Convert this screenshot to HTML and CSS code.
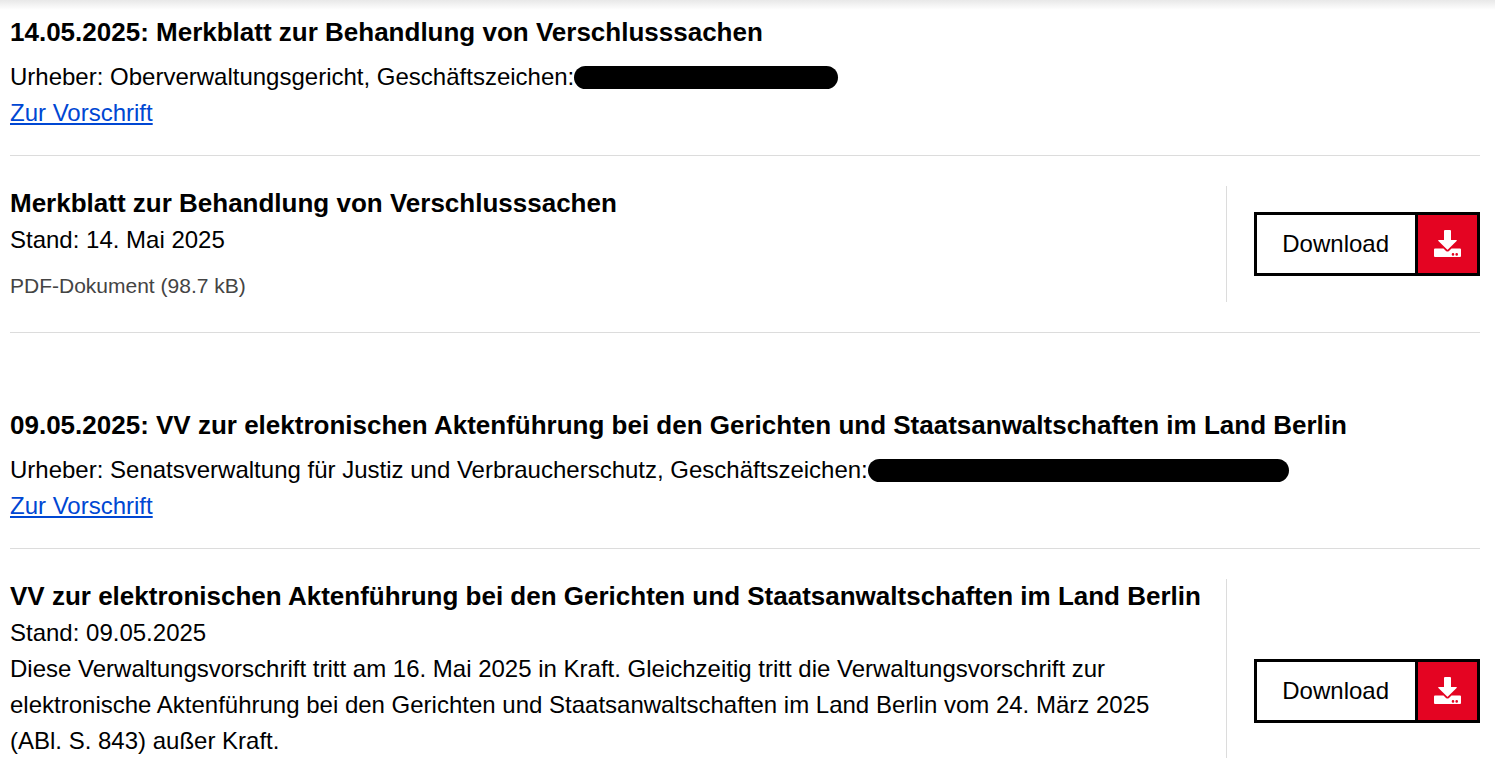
FILE: index.html
```
<!DOCTYPE html>
<html lang="de">
<head>
    <meta charset="UTF-8">
    <meta name="viewport" content="width=device-width, initial-scale=1">
    <title>Verwaltungsvorschriften</title>
    <link rel="stylesheet" href="styles.css">
</head>
<body>
<main class="list">
    <section class="entry">
        <h2 class="title">14.05.2025: Merkblatt zur Behandlung von Verschlusssachen</h2>
        <p class="author"><span>Urheber: Oberverwaltungsgericht, Geschäftszeichen:</span><span class="redacted short"></span></p>
        <p><a class="link" href="#merkblatt">Zur Vorschrift</a></p>
        <div class="download" id="merkblatt">
            <div class="info">
                <h3 class="title">Merkblatt zur Behandlung von Verschlusssachen</h3>
                <p>Stand: 14. Mai 2025</p>
                <p class="meta">PDF-Dokument (98.7 kB)</p>
            </div>
            <div class="action">
                <a class="button" href="#">
                    <span class="label">Download</span>
                    <span class="icon">
                        <svg width="27" height="28" viewBox="0 0 27 28" fill="#fff" aria-hidden="true">
                            <path d="M10 1a1 1 0 0 1 1-1h5a1 1 0 0 1 1 1v9h5.2q1.2.1.4 1L13.9 19.5q-.4.4-.8 0L4.400 11q-.8-.9.4-1H10z"/>
                            <path fill-rule="evenodd" d="M1 18.500h8.500l2.500 2.400q1.500 1.200 3 0l2.500-2.400H26a1 1 0 0 1 1 1V26a1 1 0 0 1-1 1H1a1 1 0 0 1-1-1v-6.500a1 1 0 0 1 1-1zM19 23.100a1.300 1.300 0 1 0 0 2.600a1.300 1.300 0 0 0 0-2.600zM22.700 23.100a1.300 1.300 0 1 0 0 2.600a1.300 1.300 0 0 0 0-2.600z"/>
                        </svg>
                    </span>
                </a>
            </div>
        </div>
    </section>

    <section class="entry">
        <h2 class="title">09.05.2025: VV zur elektronischen Aktenführung bei den Gerichten und Staatsanwaltschaften im Land Berlin</h2>
        <p class="author"><span>Urheber: Senatsverwaltung für Justiz und Verbraucherschutz, Geschäftszeichen:</span><span class="redacted long"></span></p>
        <p><a class="link" href="#aktenfuehrung">Zur Vorschrift</a></p>
        <div class="download" id="aktenfuehrung">
            <div class="info">
                <h3 class="title">VV zur elektronischen Aktenführung bei den Gerichten und Staatsanwaltschaften im Land Berlin</h3>
                <p>Stand: 09.05.2025</p>
                <p>Diese Verwaltungsvorschrift tritt am 16. Mai 2025 in Kraft. Gleichzeitig tritt die Verwaltungsvorschrift zur elektronische Aktenführung bei den Gerichten und Staatsanwaltschaften im Land Berlin vom 24. März 2025 (ABl. S. 843) außer Kraft.</p>
                <p class="meta"></p>
            </div>
            <div class="action">
                <a class="button" href="#">
                    <span class="label">Download</span>
                    <span class="icon">
                        <svg width="27" height="28" viewBox="0 0 27 28" fill="#fff" aria-hidden="true">
                            <path d="M10 1a1 1 0 0 1 1-1h5a1 1 0 0 1 1 1v9h5.2q1.2.1.4 1L13.9 19.5q-.4.4-.8 0L4.400 11q-.8-.9.4-1H10z"/>
                            <path fill-rule="evenodd" d="M1 18.500h8.500l2.500 2.400q1.500 1.200 3 0l2.500-2.400H26a1 1 0 0 1 1 1V26a1 1 0 0 1-1 1H1a1 1 0 0 1-1-1v-6.500a1 1 0 0 1 1-1zM19 23.100a1.300 1.300 0 1 0 0 2.600a1.300 1.300 0 0 0 0-2.600zM22.700 23.100a1.300 1.300 0 1 0 0 2.600a1.300 1.300 0 0 0 0-2.600z"/>
                        </svg>
                    </span>
                </a>
            </div>
        </div>
    </section>
</main>
</body>
</html>
```

FILE: styles.css
```
* {
    box-sizing: border-box;
    margin: 0;
    padding: 0;
}
body {
    height: 100vh;
    overflow: hidden;
    font-family: "Liberation Sans", Arial, sans-serif;
    font-size: 24px;
    line-height: 36px;
    color: #000;
    background: #fff linear-gradient(#e8e8e8, #fff) 0 0 / 100% 10px no-repeat;
}
.list {
    display: flex;
    flex-direction: column;
    gap: 75px;
    padding: 15px 15px 0 10px;
}
.title {
    font-size: 26px;
    line-height: 34px;
    font-weight: bold;
}
.entry > .title {
    margin-bottom: 10px;
}
.author {
    display: flex;
    align-items: center;
}
/* geschwärztes Geschäftszeichen */
.redacted {
    height: 23px;
    border-radius: 12px;
    background: #000;
}
.short {
    width: 264px;
}
.long {
    width: 421px;
}
.link {
    color: #0047d3;
    text-decoration: underline;
    text-decoration-thickness: 2px;
    text-underline-offset: 2px;
}
.download {
    display: flex;
    margin-top: 24px;
    padding: 30px 0;
    border-top: 1px solid #dcdcdc;
    border-bottom: 1px solid #dcdcdc;
}
.info {
    flex: 1;
    padding-right: 20px;
}
.info .title {
    margin-bottom: 2px;
}
.meta {
    min-height: 32px;
    margin-top: 12px;
    font-size: 21px;
    line-height: 32px;
    color: #444;
}
.action {
    display: flex;
    align-items: center;
    padding-left: 27px;
    border-left: 1px solid #dcdcdc;
}
.button {
    display: flex;
    height: 64px;
    border: 3px solid #000;
    color: #000;
    text-decoration: none;
}
.label {
    display: flex;
    align-items: center;
    padding: 0 26px 0 25px;
}
.icon {
    display: flex;
    align-items: center;
    justify-content: center;
    width: 62px;
    border-left: 3px solid #000;
    background: #e40422;
}
```
